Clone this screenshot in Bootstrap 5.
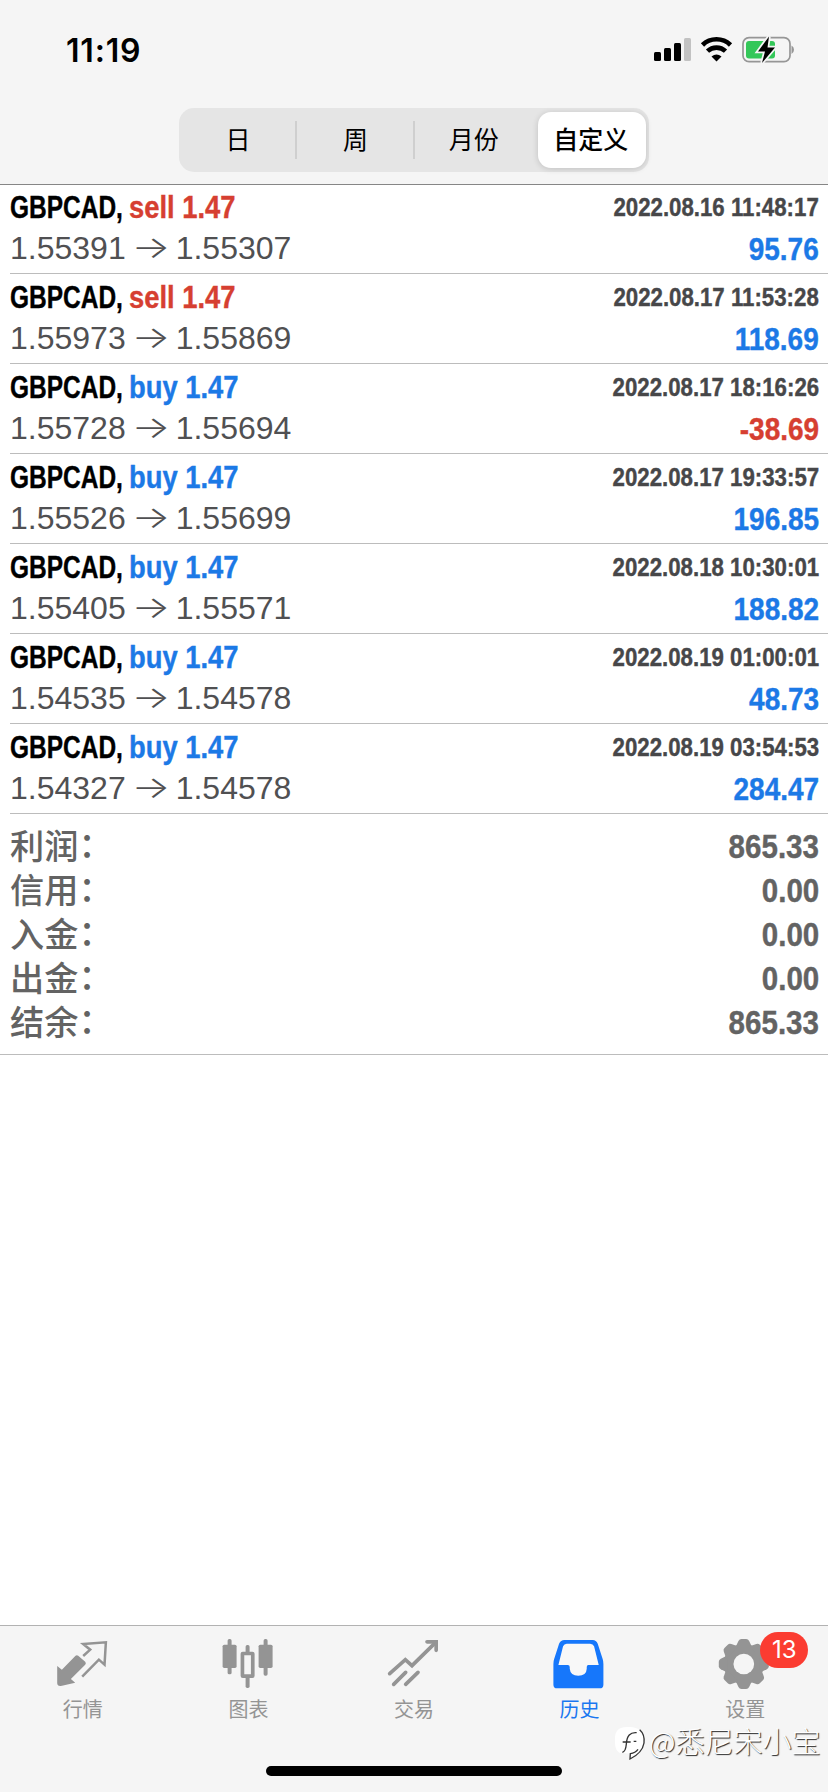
<!DOCTYPE html>
<html lang="zh-CN">
<head>
<meta charset="utf-8">
<meta name="viewport" content="width=device-width, initial-scale=1">
<title>历史</title>
<link href="https://cdn.jsdelivr.net/npm/bootstrap@5.3.0/dist/css/bootstrap.min.css" rel="stylesheet">
<style>
body{font-family:"Liberation Sans","Noto Sans CJK SC",sans-serif;background:#fff;color:#000}
.screen{width:828px;height:1792px;overflow:hidden}
.topbar{height:184px;background:#f5f5f5;box-shadow:0 1px 0 #868686;z-index:1}
.status{height:108px;padding:31px 34px 37px 66px}
.clock{font:600 32px/40px Inter,sans-serif;letter-spacing:.8px}
.status svg{margin-top:-1px}
.segments{width:470px;height:64px;margin-left:179px;border-radius:15px;background:#e5e5e5;font:400 25px/34px "Noto Sans CJK SC",sans-serif}
.seg{width:117.5px;height:64px}
.seg-line{border-right:2px solid #cfcfcf;height:38px;width:118px;flex:none}
.seg>div>span,.seg>span{margin-top:-5px}
.seg-line span,.seg>span{margin-left:2px}
.seg-on{width:108px;height:56px;margin-left:3px;border-radius:13px;background:#fff;font-weight:500;box-shadow:0 1px 6px rgba(0,0,0,.16)}
.seg-on span{margin-left:-2px}
.deal{height:90px;margin-left:10px;padding-right:9px;border-bottom:1px solid #bcbcbc}
.cond{font-weight:700;white-space:nowrap;-webkit-text-stroke:.4px currentColor}
.cond-l{display:inline-block;transform:scaleX(.855);transform-origin:left}
.cond-r{transform:scaleX(.875);transform-origin:right}
.deal-title{font-size:32px;line-height:40px;margin-top:3px}
.sym{width:119px;transform:scaleX(.765)}
.sell{color:#d63f31}
.buy{color:#1c79e6}
.date{font-size:25px;line-height:40px;margin-top:3px;color:#474749;transform:scaleX(.89)}
.price{font-size:32px;line-height:42px;color:#505052}
.arrow{display:inline-block;width:50px;text-align:center;font:300 30px/30px Inter,sans-serif;transform:translateY(-1px) scaleX(1.36)}
.gain{font-size:32px;line-height:44px}
.totals{height:241px;padding:12px 9px 0 10px;border-bottom:1px solid #bcbcbc;color:#636363}
.total{height:44px}
.total-name{font:500 34.2px/40px "Noto Sans CJK SC",sans-serif;margin-top:-2px}
.colon{display:inline-block;line-height:34px;transform:translateY(-2px)}
.total-sum{font-size:33px;line-height:44px;margin-top:-1px;transform:scaleX(.895)}
.tabs{height:167px;border-top:1px solid #b2b2b2;background:#f5f5f5;color:#949494}
.tab{width:20%;padding-top:10px;font:400 20px/26px "Noto Sans CJK SC",sans-serif}
.tab svg{width:56px;height:54px;display:block}
.tab span.name{margin-top:6px}
.tab.on{color:#1a77f0}
.count{position:absolute;left:98px;top:6px;width:48px;height:36px;border-radius:18px;background:#fb3c31;color:#fff;font:400 24px/36px Inter,sans-serif;text-align:center}
.home{position:absolute;left:266px;bottom:16px;width:296px;height:10px;border-radius:5px;background:#000}
.mark-user{position:absolute;left:614px;top:1725px;color:#fff;font:300 29px/30px "Noto Sans CJK SC",sans-serif;text-shadow:1px 1px 1px #222;white-space:nowrap}
.mark-user span{margin:-6px 0 0 1px}
</style>
</head>
<body>
<div class="screen d-flex flex-column position-relative">
  <header class="topbar position-relative">
    <div class="status d-flex justify-content-between">
      <span class="clock">11:19</span>
      <svg width="144" height="40" viewBox="649 30 144 40">
        <g><rect x="653" y="52" width="7" height="9" rx="1.5"/><rect x="663" y="48" width="7" height="13" rx="1.5"/><rect x="673" y="43" width="7" height="18" rx="1.5"/><rect x="683" y="38" width="7" height="23" rx="1.5" fill="#c2c2c2"/></g>
        <path d="M701.5 45a20 20 0 0 1 28 0M706.5 51.2a13 13 0 0 1 18 0" fill="none" stroke="#000" stroke-width="4.6"/>
        <path d="M710.500 56.500a8 8 0 0 1 10 0L715.500 61.500Z"/>
        <rect x="742" y="37.700" width="47" height="24" rx="6" fill="none" stroke="#969696" stroke-width="1.700"/>
        <path d="M790.500 45.500q2.500 1.300 2.500 4.300t-2.500 4.300Z" fill="#969696"/>
        <rect x="745" y="41" width="29" height="17.500" rx="3" fill="#34c759"/>
        <path d="M768 36.500 757 51.500h7l-3 11.500 13-15.500h-7.500Z" stroke="#f5f5f5" stroke-width="3.500" paint-order="stroke"/>
      </svg>
    </div>
    <nav class="segments d-flex align-items-center">
      <div class="seg d-flex align-items-center"><div class="seg-line d-flex align-items-center justify-content-center"><span>日</span></div></div>
      <div class="seg d-flex align-items-center"><div class="seg-line d-flex align-items-center justify-content-center"><span>周</span></div></div>
      <div class="seg d-flex align-items-center justify-content-center"><span>月份</span></div>
      <div class="seg d-flex align-items-center justify-content-center"><div class="seg-on d-flex align-items-center justify-content-center"><span>自定义</span></div></div>
    </nav>
  </header>

  <main class="flex-grow-1">
    <div>
      <div class="deal d-flex justify-content-between"><div><div class="deal-title cond"><span class="cond-l sym">GBPCAD,</span><span class="cond-l sell">sell 1.47</span></div><div class="price">1.55391<span class="arrow">→</span>1.55307</div></div><div class="text-end"><div class="date cond cond-r">2022.08.16 11:48:17</div><div class="gain cond cond-r buy">95.76</div></div></div>
      <div class="deal d-flex justify-content-between"><div><div class="deal-title cond"><span class="cond-l sym">GBPCAD,</span><span class="cond-l sell">sell 1.47</span></div><div class="price">1.55973<span class="arrow">→</span>1.55869</div></div><div class="text-end"><div class="date cond cond-r">2022.08.17 11:53:28</div><div class="gain cond cond-r buy">118.69</div></div></div>
      <div class="deal d-flex justify-content-between"><div><div class="deal-title cond"><span class="cond-l sym">GBPCAD,</span><span class="cond-l buy">buy 1.47</span></div><div class="price">1.55728<span class="arrow">→</span>1.55694</div></div><div class="text-end"><div class="date cond cond-r">2022.08.17 18:16:26</div><div class="gain cond cond-r sell">-38.69</div></div></div>
      <div class="deal d-flex justify-content-between"><div><div class="deal-title cond"><span class="cond-l sym">GBPCAD,</span><span class="cond-l buy">buy 1.47</span></div><div class="price">1.55526<span class="arrow">→</span>1.55699</div></div><div class="text-end"><div class="date cond cond-r">2022.08.17 19:33:57</div><div class="gain cond cond-r buy">196.85</div></div></div>
      <div class="deal d-flex justify-content-between"><div><div class="deal-title cond"><span class="cond-l sym">GBPCAD,</span><span class="cond-l buy">buy 1.47</span></div><div class="price">1.55405<span class="arrow">→</span>1.55571</div></div><div class="text-end"><div class="date cond cond-r">2022.08.18 10:30:01</div><div class="gain cond cond-r buy">188.82</div></div></div>
      <div class="deal d-flex justify-content-between"><div><div class="deal-title cond"><span class="cond-l sym">GBPCAD,</span><span class="cond-l buy">buy 1.47</span></div><div class="price">1.54535<span class="arrow">→</span>1.54578</div></div><div class="text-end"><div class="date cond cond-r">2022.08.19 01:00:01</div><div class="gain cond cond-r buy">48.73</div></div></div>
      <div class="deal d-flex justify-content-between"><div><div class="deal-title cond"><span class="cond-l sym">GBPCAD,</span><span class="cond-l buy">buy 1.47</span></div><div class="price">1.54327<span class="arrow">→</span>1.54578</div></div><div class="text-end"><div class="date cond cond-r">2022.08.19 03:54:53</div><div class="gain cond cond-r buy">284.47</div></div></div>
    </div>
    <div class="totals">
      <div class="total d-flex justify-content-between"><span class="total-name">利润<span class="colon">：</span></span><span class="total-sum cond cond-r">865.33</span></div>
      <div class="total d-flex justify-content-between"><span class="total-name">信用<span class="colon">：</span></span><span class="total-sum cond cond-r">0.00</span></div>
      <div class="total d-flex justify-content-between"><span class="total-name">入金<span class="colon">：</span></span><span class="total-sum cond cond-r">0.00</span></div>
      <div class="total d-flex justify-content-between"><span class="total-name">出金<span class="colon">：</span></span><span class="total-sum cond cond-r">0.00</span></div>
      <div class="total d-flex justify-content-between"><span class="total-name">结余<span class="colon">：</span></span><span class="total-sum cond cond-r">865.33</span></div>
    </div>
  </main>

  <footer class="tabs d-flex">
    <div class="tab d-flex flex-column align-items-center">
      <svg viewBox="164.400 78 168 162"><path d="M171 168 185 179 226 137Q230 134 234 137L255 155Q259 160 255 164L212 207 225 218 182 228Q171 229 171 219Z" fill="currentColor"/><path d="M249 138 270 119 249 102 317 97 313 164 296 149 246 200" fill="none" stroke="currentColor" stroke-width="7.500"/></svg>
      <span class="name">行情</span>
    </div>
    <div class="tab d-flex flex-column align-items-center">
      <svg viewBox="661.200 78 168 162" fill="currentColor"><rect x="684" y="87" width="12" height="106" rx="5"/><rect x="669" y="104" width="42" height="70" rx="5"/><rect x="792" y="87" width="12" height="110" rx="5"/><rect x="777" y="104" width="42" height="70" rx="5"/><rect x="738" y="105" width="12" height="25" rx="5"/><rect x="738" y="196" width="12" height="38" rx="5"/><rect x="728.500" y="130.500" width="31" height="68" rx="1" fill="none" stroke="currentColor" stroke-width="11"/></svg>
      <span class="name">图表</span>
    </div>
    <div class="tab d-flex flex-column align-items-center">
      <svg viewBox="258 78 168 162" fill="none" stroke="currentColor" stroke-width="11" stroke-linecap="round"><path d="M269 191 316 149 336 167 404 100M281 223 317 187M317 223 354 187"/><path d="M381 95.500H408.500V121" stroke-linejoin="miter"/></svg>
      <span class="name">交易</span>
    </div>
    <div class="tab on d-flex flex-column align-items-center">
      <svg viewBox="64.800 78 168 162"><path d="M102 90H187Q197 90 202 101L217 148Q219 154 219 162V224Q219 235 208 235H80Q69 235 69 224V162Q69 154 71 148L86 101Q91 90 102 90Z" fill="#1677fb"/><path d="M109 101H179Q188 101 191 109L205 165H174Q169 165 169 171V176Q168 197 143.500 197 120 197 118 176V171Q118 165 112 165H84L98 109Q101 101 109 101Z" fill="#f8f8f8"/></svg>
      <span class="name">历史</span>
    </div>
    <div class="tab d-flex flex-column align-items-center position-relative">
      <svg viewBox="561.600 78 168 162"><defs><path id="tooth" d="M-26-48-16-69Q-13-75-7-75H7Q13-75 16-69L26-48Z"/></defs><g transform="translate(642 162)" fill="currentColor"><circle r="60"/><use href="#tooth"/><use href="#tooth" transform="rotate(45)"/><use href="#tooth" transform="rotate(90)"/><use href="#tooth" transform="rotate(135)"/><use href="#tooth" transform="rotate(180)"/><use href="#tooth" transform="rotate(225)"/><use href="#tooth" transform="rotate(270)"/><use href="#tooth" transform="rotate(315)"/><circle r="31" fill="#f5f5f5"/></g></svg>
      <span class="name">设置</span>
      <span class="count">13</span>
    </div>
  </footer>
  <div class="home"></div>
  <div class="mark-user d-flex align-items-center">
    <svg width="34" height="36" viewBox="252 348 102 108"><path d="M255 385Q256 355 290 354 342 350 343 398 340 432 300 449L303 434 268 431Q255 425 255 400Z" fill="#fff"/><path d="M277 430Q287 428 289 405 291 368 320 371M278 399H302M311 397H319M329 362Q345 376 342 402 337 432 300 450L301 434Q316 432 324 421" fill="none" stroke="#333" stroke-width="4"/></svg>
    <span>@悉尼宋小宝</span>
  </div>
</div>
<script src="https://cdn.jsdelivr.net/npm/bootstrap@5.3.0/dist/js/bootstrap.bundle.min.js"></script>
</body>
</html>
